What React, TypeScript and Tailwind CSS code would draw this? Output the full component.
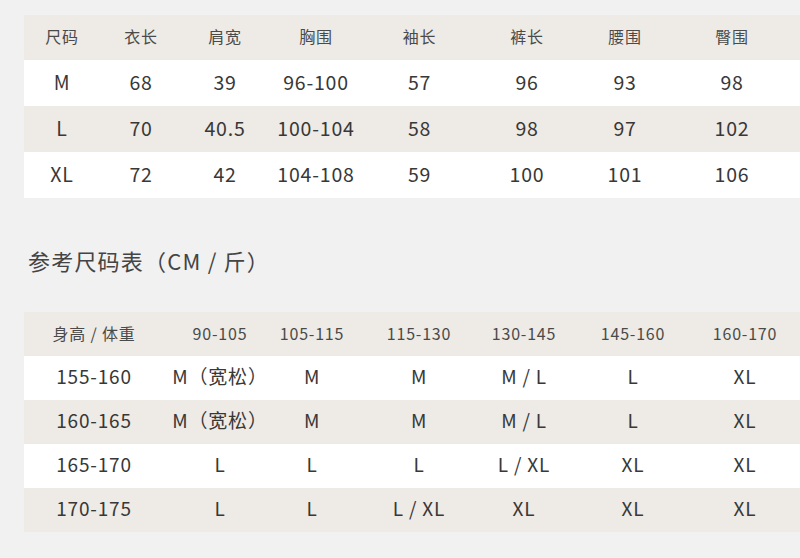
const font = "font-['Noto_Sans_CJK_SC','Noto_Sans',sans-serif]";

const garmentHead = ["尺码", "衣长", "肩宽", "胸围", "袖长", "裤长", "腰围", "臀围"];
const garmentRows = [
  ["M", "68", "39", "96-100", "57", "96", "93", "98"],
  ["L", "70", "40.5", "100-104", "58", "98", "97", "102"],
  ["XL", "72", "42", "104-108", "59", "100", "101", "106"],
];

const refHead = ["身高 / 体重", "90-105", "105-115", "115-130", "130-145", "145-160", "160-170"];
const refRows = [
  ["155-160", "M（宽松）", "M", "M", "M / L", "L", "XL"],
  ["160-165", "M（宽松）", "M", "M", "M / L", "L", "XL"],
  ["165-170", "L", "L", "L", "L / XL", "XL", "XL"],
  ["170-175", "L", "L", "L / XL", "XL", "XL", "XL"],
];

const garmentCols = "grid-cols-[76px_82px_86px_96px_111px_104px_92px_122px]";
const refCols = "grid-cols-[140px_112px_72px_142px_68px_150px_74px]";

export default function App() {
  return (
    <div className={`min-h-[558px] w-[800px] overflow-hidden bg-[#f1f1f1] pt-[15px] pl-6 ${font}`}>
      <div className="flex flex-col">
        <div
          className={`grid ${garmentCols} h-[45px] items-center bg-[#eeeae5] pb-[3px] text-[16px] tracking-[0.8px] text-[#4a4a4a]`}
        >
          {garmentHead.map((h) => (
            <div key={h} className="text-center">{h}</div>
          ))}
        </div>
        {garmentRows.map((row, idx) => (
          <div
            key={row[0]}
            className={`grid ${garmentCols} h-[46px] items-center pb-[3px] text-[19.5px] tracking-[0.8px] text-[#383838] ${
              idx % 2 === 1 ? "bg-[#eeeae5]" : "bg-white"
            }`}
          >
            {row.map((cell, i) => (
              <div key={i} className="text-center whitespace-nowrap">{cell}</div>
            ))}
          </div>
        ))}
      </div>

      <h2 className="mt-[46px] mb-[36px] h-[32px] pl-1 text-[22px] leading-[32px] font-normal tracking-[1.2px] text-[#444]">
        参考尺码表（CM / 斤）
      </h2>

      <div className="flex flex-col">
        <div
          className={`grid ${refCols} h-[44px] items-center bg-[#eeeae5] pb-[3px] text-[16px] tracking-[0.8px] text-[#4a4a4a]`}
        >
          {refHead.map((h) => (
            <div key={h} className="text-center whitespace-nowrap">{h}</div>
          ))}
        </div>
        {refRows.map((row, idx) => (
          <div
            key={row[0]}
            className={`grid ${refCols} h-[44px] items-center pb-[3px] text-[19px] tracking-[0.8px] text-[#383838] ${
              idx % 2 === 1 ? "bg-[#eeeae5]" : "bg-white"
            }`}
          >
            {row.map((cell, i) => (
              <div key={i} className="text-center whitespace-nowrap">{cell}</div>
            ))}
          </div>
        ))}
      </div>
    </div>
  );
}
